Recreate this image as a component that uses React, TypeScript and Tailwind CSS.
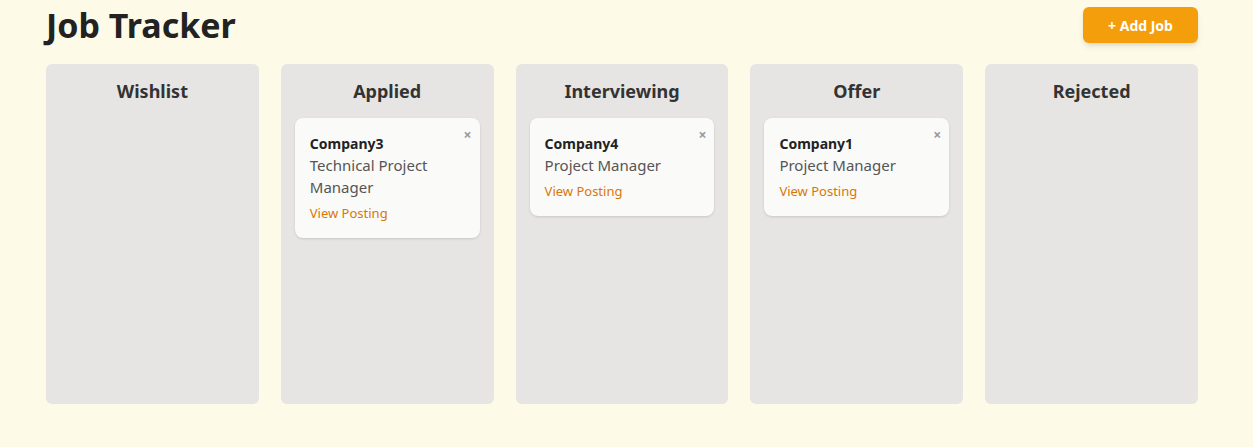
import React from "react";

const cols: { name: string; cards: { c: string; t: string }[] }[] = [
  { name: "Wishlist", cards: [] },
  { name: "Applied", cards: [{ c: "Company3", t: "Technical Project Manager" }] },
  { name: "Interviewing", cards: [{ c: "Company4", t: "Project Manager" }] },
  { name: "Offer", cards: [{ c: "Company1", t: "Project Manager" }] },
  { name: "Rejected", cards: [] },
];

export default function App() {
  return (
    <div className="min-h-[447px] bg-[#fefae8] font-[Inter,'Inter_Variable',Roboto,sans-serif]">
      <div className="w-[1152px] ml-[46px]">
        <div className="flex items-center justify-between h-[50px]">
          <h1 className="text-[34px] font-bold text-[#222] leading-none">Job Tracker</h1>
          <button className="h-[36px] w-[115px] rounded-md bg-[#f59e0b] text-white font-bold text-[14px] shadow-md">
            + Add Job
          </button>
        </div>
        <div className="grid grid-cols-5 gap-[22px] mt-[14px]">
          {cols.map((col) => (
            <div key={col.name} className="h-[340px] rounded-md bg-[#e6e5e3] px-[14px] pt-[16px]">
              <h2 className="text-center text-[18px] font-bold text-[#333] leading-[22px]">{col.name}</h2>
              <div className="mt-[16px] flex flex-col gap-3">
                {col.cards.map((card) => (
                  <div key={card.c} className="relative rounded-lg bg-[#fafaf9] shadow-sm px-[15px] pt-[16px] pb-[16px]">
                    <span className="absolute right-[8px] top-[6px] text-[#999] text-[14px] font-bold">×</span>
                    <div className="text-[14px] font-bold text-[#222] leading-[20px]">{card.c}</div>
                    <div className="text-[15px] text-[#555] leading-[22px]">{card.t}</div>
                    <div className="text-[13px] text-[#d97706] mt-[6px] leading-[18px]">View Posting</div>
                  </div>
                ))}
              </div>
            </div>
          ))}
        </div>
      </div>
    </div>
  );
}
